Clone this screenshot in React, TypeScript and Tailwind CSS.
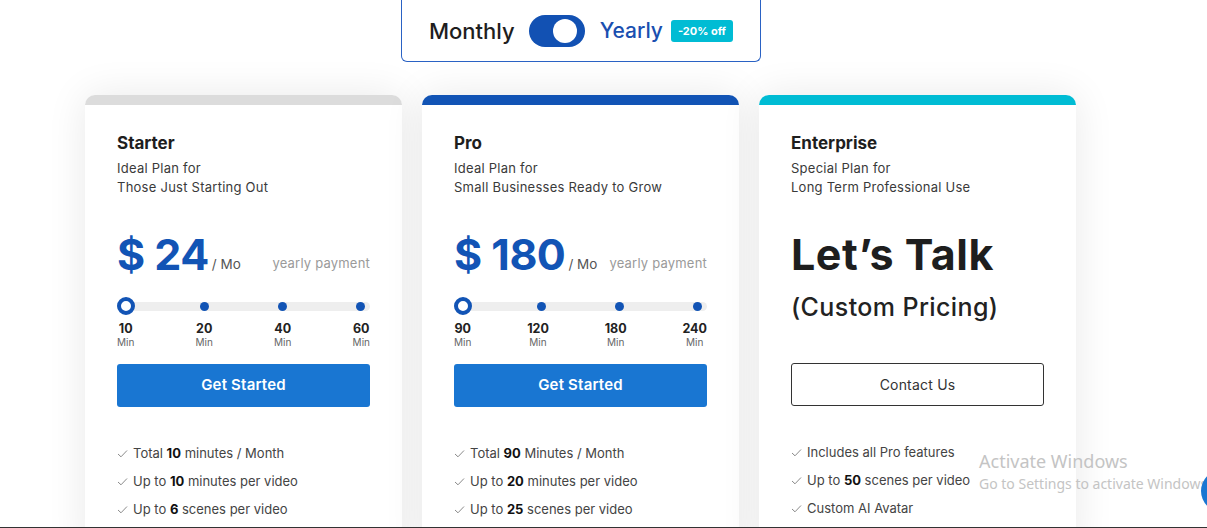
import { ReactNode } from "react";

interface IPlan {
    name: string;
    lines: string[];
    bar: string;
    price?: string;
    marks?: string[];
    features: ReactNode[];
}

const plans: IPlan[] = [
    {
        name: "Starter",
        lines: ["Ideal Plan for", "Those Just Starting Out"],
        bar: "bg-[#dcdcdc]",
        price: "24",
        marks: ["10", "20", "40", "60"],
        features: [
            <>Total <b>10</b> minutes / Month</>,
            <>Up to <b>10</b> minutes per video</>,
            <>Up to <b>6</b> scenes per video</>,
        ],
    },
    {
        name: "Pro",
        lines: ["Ideal Plan for", "Small Businesses Ready to Grow"],
        bar: "bg-[#1254b5]",
        price: "180",
        marks: ["90", "120", "180", "240"],
        features: [
            <>Total <b>90</b> Minutes / Month</>,
            <>Up to <b>20</b> minutes per video</>,
            <>Up to <b>25</b> scenes per video</>,
        ],
    },
    {
        name: "Enterprise",
        lines: ["Special Plan for", "Long Term Professional Use"],
        bar: "bg-[#00bcd4]",
        features: [
            <>Includes all Pro features</>,
            <>Up to <b>50</b> scenes per video</>,
            <>Custom AI Avatar</>,
        ],
    },
];

function Check() {
    return (
        <svg width="11" height="9" viewBox="0 0 11 9" fill="none" className="shrink-0">
            <path d="M1 5 L4 7.8 L10 1.5" stroke="#8a8a8a" strokeWidth="1" />
        </svg>
    );
}

function Slider({ marks }: { marks: string[] }) {
    return (
        <div className="mt-[18px]">
            <div className="relative flex items-center h-[18px]">
                <div className="absolute inset-x-0 h-[9px] rounded-full bg-[#eeeeee]" />
                <div className="relative flex w-full justify-between">
                    {marks.map((m, i) => (
                        <div key={m} className="w-[18px] h-[18px] flex items-center justify-center">
                            {i === 0 ? (
                                <div className="w-[18px] h-[18px] rounded-full border-[4px] border-[#1254b5] bg-white" />
                            ) : (
                                <div className="w-[9px] h-[9px] rounded-full bg-[#1254b5]" />
                            )}
                        </div>
                    ))}
                </div>
            </div>
            <div className="flex justify-between mt-[6px]">
                {marks.map(m => (
                    <div key={m} className="flex flex-col items-center">
                        <span className="text-[12.5px] leading-[16px] font-bold text-[#222]">{m}</span>
                        <span className="text-[10px] leading-[11px] text-[#666]">Min</span>
                    </div>
                ))}
            </div>
        </div>
    );
}

function PlanCard({ plan }: { plan: IPlan }) {
    return (
        <div className="w-[317px] h-[460px] shrink-0 rounded-t-[10px] overflow-hidden bg-white shadow-[0_0_40px_rgba(0,0,0,0.09)]">
            <div className={`h-[10px] ${plan.bar}`} />
            <div className="px-[32px] pt-[26px]">
                <h3 className="text-[17px] leading-[24px] font-bold text-[#1e1e1e]">{plan.name}</h3>
                <div className="mt-[4px] text-[13px] leading-[19px] tracking-[0.25px] text-[#3a3a3a]">
                    {plan.lines.map(l => <p key={l}>{l}</p>)}
                </div>

                {plan.price ? (
                    <>
                        <div className="mt-[32px] flex items-end justify-between h-[50px]">
                            <div className="flex items-end">
                                <span className="text-[43px] leading-[50px] font-bold text-[#1254b5] tracking-[-0.5px]">$ {plan.price}</span>
                                <span className="text-[13.5px] leading-[20px] text-[#555] ml-[3px] mb-[5px]">/ Mo</span>
                            </div>
                            <span className="text-[13px] leading-[20px] text-[#9a9a9a] mb-[6px] tracking-[0.2px]">yearly payment</span>
                        </div>
                        <Slider marks={plan.marks!} />
                        <button className="mt-[16px] w-full h-[43px] rounded-[3px] bg-[#1976d2] text-white text-[15px] font-semibold tracking-[0.2px]">
                            Get Started
                        </button>
                    </>
                ) : (
                    <>
                        <div className="mt-[32px] h-[50px] flex items-end">
                            <span className="text-[43px] leading-[50px] font-bold text-[#1e1e1e] tracking-[0.5px]">Let’s Talk</span>
                        </div>
                        <p className="mt-[12px] text-[25px] leading-[32px] font-medium tracking-[0.4px] text-[#222]">(Custom Pricing)</p>
                        <button className="mt-[40px] w-full h-[43px] rounded-[3px] border border-[#333] bg-white text-[#333] text-[14px] tracking-[0.2px]">
                            Contact Us
                        </button>
                    </>
                )}

                <ul className="mt-[37px] flex flex-col gap-[9px]">
                    {plan.features.map((f, i) => (
                        <li key={i} className="flex items-center gap-[5px] h-[19px] text-[13px] text-[#444] [&_b]:font-bold [&_b]:text-[#111]">
                            <Check />
                            <span>{f}</span>
                        </li>
                    ))}
                </ul>
            </div>
        </div>
    );
}

export default function App() {
    return (
        <div className="relative h-[528px] overflow-hidden bg-white border-b border-[#333] font-['Inter',sans-serif]">
            <div className="w-[992px] ml-[85px]">
                <div className="mx-auto w-[360px] h-[62px] border-x border-b border-[#2a62c4] rounded-b-[6px] flex items-center pl-[27px] pr-[28px] pt-[1px]">
                    <span className="text-[22px] font-medium text-[#1e1e1e]">Monthly</span>
                    <div className="ml-[14px] w-[56px] h-[32px] shrink-0 rounded-full bg-[#1251b3] flex items-center justify-end pr-[8px]">
                        <div className="w-[24px] h-[24px] rounded-full bg-white" />
                    </div>
                    <span className="ml-[15px] text-[21px] font-medium text-[#1a4fb0]">Yearly</span>
                    <span className="ml-[8px] h-[22px] px-[7px] shrink-0 whitespace-nowrap rounded-[3px] bg-[#00bcd4] text-white text-[11px] font-bold flex items-center">-20% off</span>
                </div>

                <div className="mt-[33px] flex gap-[20px]">
                    {plans.map(p => <PlanCard key={p.name} plan={p} />)}
                </div>
            </div>

            <div className="absolute left-[979px] top-[448px] text-[#c4c4c4] font-['Noto_Sans',sans-serif] whitespace-nowrap pointer-events-none">
                <p className="text-[18px] leading-[26px]">Activate Windows</p>
                <p className="text-[14px] leading-[20px]">Go to Settings to activate Windows.</p>
            </div>
            <div className="absolute left-[1201px] top-[470px] w-[42px] h-[42px] rounded-full bg-[#1976d2]" />
        </div>
    );
}
